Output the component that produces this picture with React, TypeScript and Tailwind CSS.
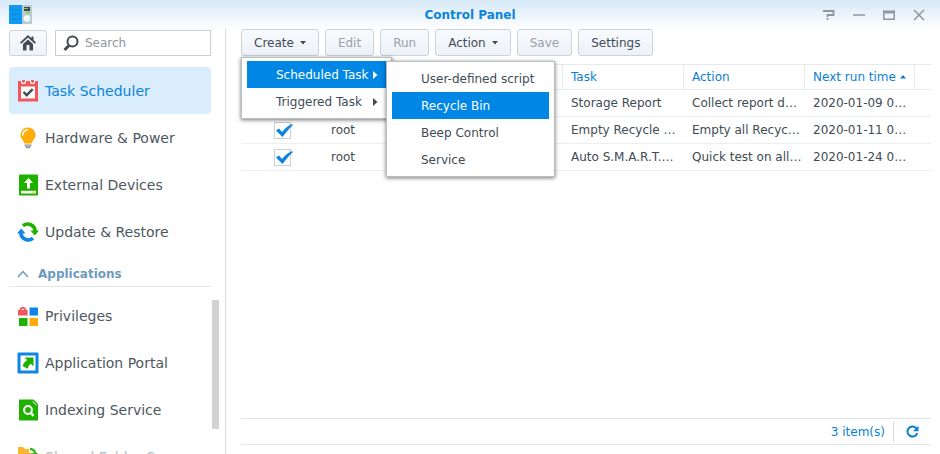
import type { ReactNode } from "react";

type NavItem = { label: string; icon: ReactNode; active?: boolean; faded?: boolean };

const TaskIcon = () => (
  <svg className="shrink-0" width="22" height="22" viewBox="0 0 22 22">
    <path d="M1 1h20v20.500H1z" fill="#f0565a" />
    <path d="M4 6.500h14v12H4z" fill="#fff" />
    <path d="M4.500 0v1.500a2 2 0 0 0 4 0V0M13.500 0v1.500a2 2 0 0 0 4 0V0" fill="#f0565a" stroke="#fff" strokeWidth="1.100" />
    <path d="M6.500 12l3.200 3.200 6-6" fill="none" stroke="#414b55" strokeWidth="2.400" />
  </svg>
);

const BulbIcon = () => (
  <svg className="shrink-0" width="22" height="22" viewBox="0 0 22 22">
    <path d="M11 .5a7.600 7.600 0 0 0-7.600 7.600c0 3.400 3.200 5 4 8.400h7.200c.8-3.400 4-5 4-8.400A7.600 7.600 0 0 0 11 .5z" fill="#ffab0a" />
    <path d="M5.600 8a5.400 5.400 0 0 1 5-5" fill="none" stroke="#fff" strokeWidth="1.600" strokeLinecap="round" />
    <path d="M7.500 17.500h7v1.200h-7zM7.500 19.300h7l-2 2h-3z" fill="#8c959d" />
  </svg>
);

const DeviceIcon = () => (
  <svg className="shrink-0" width="22" height="22" viewBox="0 0 22 22">
    <rect x="2" y="0.500" width="19" height="21" rx="1" fill="#1fb100" />
    <path d="M11.500 4l4.500 5h-3v5.500h-3V9H7z" fill="#fff" />
    <path d="M4 16.800h15v2.700H4z" fill="#fff" />
    <path d="M15.500 17.600h2v1h-2z" fill="#ff9c1a" />
  </svg>
);

const UpdateIcon = () => (
  <svg className="shrink-0" width="22" height="22" viewBox="0 0 22 22">
    <path d="M6 4.800A7.500 7.500 0 0 1 18.200 10" fill="none" stroke="#1fb100" strokeWidth="3.600" />
    <path d="M13.500 9.500H22l-4.200 5z" fill="#1fb100" />
    <path d="M16 17.200A7.500 7.500 0 0 1 3.800 12" fill="none" stroke="#0f86e4" strokeWidth="3.600" />
    <path d="M8.500 12.500H0l4.200-5z" fill="#0f86e4" />
  </svg>
);

const PrivilegesIcon = () => (
  <svg className="shrink-0" width="22" height="22" viewBox="0 0 22 22">
    <path d="M3.500 6V4.500a2.500 2.500 0 0 1 4.800 0V6" fill="none" stroke="#f0565a" strokeWidth="2" />
    <rect x="1" y="5" width="9.600" height="5.500" rx="0.500" fill="#f0565a" />
    <path d="M12.500 2.500h8.500v8h-8.500z" fill="#0f86e4" />
    <path d="M2 13h8.500v8H2z" fill="#1fb100" />
    <path d="M12.500 13h8.500v8h-8.500z" fill="#ffab0a" />
  </svg>
);

const PortalIcon = () => (
  <svg className="shrink-0" width="22" height="22" viewBox="0 0 22 22">
    <rect x="0.500" y="0.500" width="21" height="21" rx="1" fill="#0f86e4" />
    <path d="M3.500 3.500h15v15h-15z" fill="#fff" />
    <path d="M7.500 5.500h9v9l-2.700-2.700c-1.800 1.400-2.800 3-3 4.900L5.800 14.200c.4-2.700 1.900-4.200 4.300-6.100z" fill="#1fb100" />
  </svg>
);

const IndexIcon = () => (
  <svg className="shrink-0" width="22" height="22" viewBox="0 0 22 22">
    <path d="M2 .5h14.500L21 5v16.500H2z" fill="#1fb100" />
    <path d="M15.500 2.500L19.500 6" stroke="#fff" strokeWidth="1" />
    <circle cx="11" cy="11" r="3.900" fill="none" stroke="#fff" strokeWidth="2" />
    <path d="M13.800 13.800l2.700 3.200" stroke="#fff" strokeWidth="2.400" />
  </svg>
);

const FolderIcon = () => (
  <svg className="shrink-0" width="22" height="22" viewBox="0 0 22 22">
    <path d="M1 1h5l2 2h8v10H1z" fill="#fbb72c" />
    <path d="M12 4a7 7 0 0 1 7 5" fill="none" stroke="#fff" strokeWidth="5" />
    <path d="M13 3a6 6 0 0 1 5.500 5" fill="none" stroke="#35b81a" strokeWidth="2.400" />
    <path d="M14 7h7l-3 4z" fill="#35b81a" />
  </svg>
);

const systemItems: NavItem[] = [
  { label: "Task Scheduler", icon: <TaskIcon />, active: true },
  { label: "Hardware & Power", icon: <BulbIcon /> },
  { label: "External Devices", icon: <DeviceIcon /> },
  { label: "Update & Restore", icon: <UpdateIcon /> },
];

const applicationItems: NavItem[] = [
  { label: "Privileges", icon: <PrivilegesIcon /> },
  { label: "Application Portal", icon: <PortalIcon /> },
  { label: "Indexing Service", icon: <IndexIcon /> },
  { label: "Shared Folder Sync", icon: <FolderIcon />, faded: true },
];

const tasks = [
  { user: "", task: "Storage Report", action: "Collect report d…", next: "2020-01-09 0…" },
  { user: "root", task: "Empty Recycle …", action: "Empty all Recyc…", next: "2020-01-11 0…" },
  { user: "root", task: "Auto S.M.A.R.T.…", action: "Quick test on all…", next: "2020-01-24 0…" },
];

function NavList({ items }: { items: NavItem[] }) {
  return (
    <ul>
      {items.map((item) => (
        <li key={item.label}>
          <a
            href="#"
            className={`flex h-[47px] items-center gap-1.5 rounded px-2 text-sm whitespace-nowrap ${
              item.active ? "bg-[#d9edfc] text-[#0a84e0]" : item.faded ? "text-[#b4b8bb]" : "text-[#4d5760]"
            }`}
          >
            {item.icon}
            {item.label}
          </a>
        </li>
      ))}
    </ul>
  );
}

function ToolButton({ children, disabled, caret }: { children: ReactNode; disabled?: boolean; caret?: boolean }) {
  return (
    <button
      type="button"
      disabled={disabled}
      className="flex h-[27px] items-center gap-1.5 rounded-[3px] border border-[#ccd3db] bg-linear-to-b from-[#f8fafd] to-[#edf2f8] px-3 text-[#414b55] disabled:text-[#9ba3aa]"
    >
      {children}
      {caret && (
        <svg width="6" height="4" viewBox="0 0 6 4">
          <path d="M0 0h6L3 3.500z" fill="#414b55" />
        </svg>
      )}
    </button>
  );
}

function MenuItem({ children, active, arrow }: { children: ReactNode; active?: boolean; arrow?: boolean }) {
  return (
    <button
      type="button"
      role="menuitem"
      className={`flex h-[27px] w-full items-center justify-between pr-2 pl-[29px] whitespace-nowrap ${
        active ? "bg-[#0086e5] text-white" : "text-[#414b55]"
      }`}
    >
      {children}
      {arrow && (
        <svg width="5" height="8" viewBox="0 0 5 8">
          <path d="M0 0l4.500 4L0 8z" fill="currentColor" />
        </svg>
      )}
    </button>
  );
}

const menuBox = "absolute border border-[#b9bec3] bg-white px-[5px] py-[3px] shadow-[0_1px_4px_rgba(0,0,0,0.55)]";
const th = "border-y border-r border-[#e6eaed] px-2 text-left font-normal text-[#0a7fd8]";
const td = "border-b border-[#eceff1] pl-2 whitespace-nowrap";

export default function App() {
  return (
    <div className="flex h-screen flex-col overflow-hidden bg-linear-to-b from-[#d6e9f7] to-white to-[30px] font-['Verdana','DejaVu_Sans',sans-serif] text-xs text-[#414b55]">
      <header className="grid h-[29px] shrink-0 grid-cols-[1fr_auto_1fr] items-center px-[9px]">
        <svg width="23" height="19" viewBox="0 0 23 19">
          <path d="M0 0h13v19H0z" fill="#0f9af0" />
          <path d="M2 4.500h9M2 9.500h9M2 14.500h9" stroke="#0a86dc" strokeWidth="1" />
          <path d="M13 0h10v19H13z" fill="#b9cbd3" />
          <path d="M15 2h6v4h-6z" fill="#384955" />
          <path d="M15 3h4v1h-4zM17 7h4v1.500h-4z" fill="#87d32d" />
          <circle cx="18" cy="13.500" r="3.300" fill="#f4f9fa" />
        </svg>
        <h1 className="font-bold text-[#0a84e0]">Control Panel</h1>
        <div className="flex items-center justify-end gap-[18px] pr-[6px] text-[#8b98a3]">
          <button type="button" aria-label="Help">
            <svg className="block" width="12" height="12" viewBox="0 0 12 12" fill="none" stroke="currentColor" strokeWidth="1.800">
              <path d="M0 2h10.500v4H4.500v2M4.500 9v2" />
            </svg>
          </button>
          <button type="button" aria-label="Minimize">
            <svg className="block" width="12" height="12" viewBox="0 0 12 12" stroke="currentColor" strokeWidth="1.500">
              <path d="M0 6h12" />
            </svg>
          </button>
          <button type="button" aria-label="Maximize">
            <svg className="block" width="12" height="12" viewBox="0 0 12 12" fill="none" stroke="currentColor">
              <path d="M.8 1.500v8.700h10.400V1.500" strokeWidth="1.500" />
              <path d="M0 3h12" strokeWidth="3" />
            </svg>
          </button>
          <button type="button" aria-label="Close">
            <svg className="block" width="12" height="12" viewBox="0 0 12 12" stroke="currentColor" strokeWidth="1.500">
              <path d="M1 1l10 10M11 1L1 11" />
            </svg>
          </button>
        </div>
      </header>

      <div className="flex min-h-0 flex-1">
        <aside className="relative w-[226px] shrink-0 overflow-hidden border-r border-[#d8dbdd] pl-[9px]">
          <div className="w-[202px]">
            <div className="flex gap-2 pt-px">
              <button
                type="button"
                aria-label="Home"
                className="flex h-[26px] w-[38px] items-center justify-center rounded-[3px] border border-[#ccd3db] bg-linear-to-b from-[#f8fafd] to-[#edf2f8]"
              >
                <svg width="16" height="16" viewBox="0 0 16 16" fill="#414b55">
                  <path d="M8 0L0 7.500l1.300 1.300L8 2.600l6.700 6.200L16 7.500l-2.500-2.400V1.500h-2v1.700z" />
                  <path d="M8 4.500L3 9v6.500h3.500V10h3v5.500H13V9z" />
                </svg>
              </button>
              <label className="flex h-[26px] min-w-0 flex-1 items-center gap-1.5 border border-[#c9ced2] bg-white pl-[7px]">
                <svg className="shrink-0" width="16" height="16" viewBox="0 0 16 16" fill="none" stroke="#414b55">
                  <circle cx="9.500" cy="6.500" r="5" strokeWidth="2" />
                  <path d="M6 10.500L1.500 15" strokeWidth="3" />
                </svg>
                <input
                  type="text"
                  aria-label="Search"
                  placeholder="Search"
                  className="w-full min-w-0 outline-none placeholder:text-[#8f979e]"
                />
              </label>
            </div>
            <nav className="pt-[11px]">
              <NavList items={systemItems} />
              <h2 className="mb-[5px] border-b border-[#e3e7ea]">
                <button
                  type="button"
                  className="flex h-[31px] items-center gap-[9px] px-2 pt-1.5 font-bold text-[#6b9bbd]"
                >
                  <svg width="12" height="8" viewBox="0 0 12 8" fill="none" stroke="currentColor" strokeWidth="1.500">
                    <path d="M1 7l5-5.500L11 7" />
                  </svg>
                  Applications
                </button>
              </h2>
              <NavList items={applicationItems} />
            </nav>
          </div>
          <div className="absolute top-[271px] right-[6px] h-[129px] w-[7px] bg-[#d2d2d2]" />
        </aside>

        <main className="flex min-w-0 flex-1 flex-col pr-[9px] pb-[9px] pl-[15px]">
          <div className="flex gap-1.5 pb-2">
            <div className="relative z-10">
              <ToolButton caret>Create</ToolButton>
              <div role="menu" className={`${menuBox} top-7 left-0 w-[151px]`}>
                <MenuItem active arrow>
                  Scheduled Task
                </MenuItem>
                <MenuItem arrow>Triggered Task</MenuItem>
                <div role="menu" className={`${menuBox} top-[3px] left-[144px] w-[169px]`}>
                  <MenuItem>User-defined script</MenuItem>
                  <MenuItem active>Recycle Bin</MenuItem>
                  <MenuItem>Beep Control</MenuItem>
                  <MenuItem>Service</MenuItem>
                </div>
              </div>
            </div>
            <ToolButton disabled>Edit</ToolButton>
            <ToolButton disabled>Run</ToolButton>
            <ToolButton caret>Action</ToolButton>
            <ToolButton disabled>Save</ToolButton>
            <ToolButton>Settings</ToolButton>
          </div>

          <table className="w-full table-fixed border-separate border-spacing-0">
            <colgroup>
              <col className="w-[82px]" />
              <col />
              <col className="w-[121px]" />
              <col className="w-[121px]" />
              <col className="w-[110px]" />
              <col className="w-[16px]" />
            </colgroup>
            <thead>
              <tr className="h-[26px]">
                <th className={th} />
                <th className={th} />
                <th className={th}>Task</th>
                <th className={th}>Action</th>
                <th className={th}>
                  <span className="flex items-center justify-center gap-1 whitespace-nowrap">
                    Next run time
                    <svg width="6" height="4" viewBox="0 0 6 4">
                      <path d="M0 3.500h6L3 0z" fill="currentColor" />
                    </svg>
                  </span>
                </th>
                <th className="border-y border-[#e6eaed]" />
              </tr>
            </thead>
            <tbody>
              {tasks.map((row) => (
                <tr key={row.task} className="h-[27px]">
                  <td className="border-b border-[#eceff1]">
                    <label className="relative mx-auto block size-[17px]">
                      <input
                        type="checkbox"
                        defaultChecked
                        aria-label={row.task}
                        className="block size-[17px] appearance-none border border-[#c9d0d6] bg-white"
                      />
                      <svg className="absolute top-0.5 left-0.5" width="17" height="13" viewBox="0 0 17 13">
                        <path d="M0 6.500l3-2 3 3.500C9 4.500 12 1.500 16 0l.8 1.200C13 4.500 10 8.500 6.500 13z" fill="#0a84e0" />
                      </svg>
                    </label>
                  </td>
                  <td className={td}>{row.user}</td>
                  <td className={td}>{row.task}</td>
                  <td className={td}>{row.action}</td>
                  <td className={td}>{row.next}</td>
                  <td className="border-b border-[#eceff1]" />
                </tr>
              ))}
            </tbody>
          </table>

          <footer className="mt-auto flex h-[27px] items-center justify-end border-y border-[#e0e5e9] pr-3 text-[#0a7fd8]">
            <span className="mr-2">3 item(s)</span>
            <span className="mr-3 h-5 w-px bg-[#d5dde3]" />
            <button type="button" aria-label="Refresh">
              <svg width="13" height="13" viewBox="0 0 13 13">
                <path d="M10.300 3.300A5 5 0 1 0 11.300 8" fill="none" stroke="currentColor" strokeWidth="2" />
                <path d="M12.500 .8v5.500H7z" fill="currentColor" />
              </svg>
            </button>
          </footer>
        </main>
      </div>
    </div>
  );
}
